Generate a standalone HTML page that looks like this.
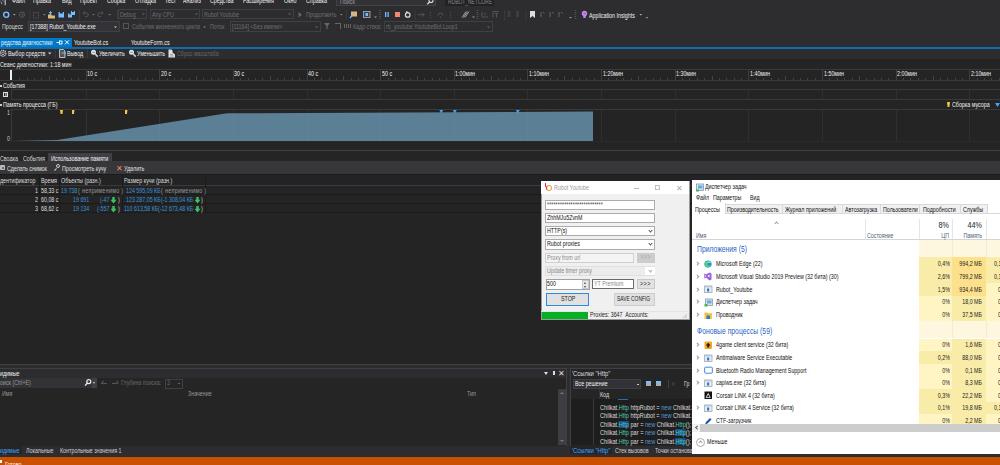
<!DOCTYPE html>
<html><head><meta charset="utf-8">
<style>
*{margin:0;padding:0;box-sizing:border-box}
html,body{width:1000px;height:465px;overflow:hidden;background:#2d2d30;font-family:"Liberation Sans",sans-serif;color:#f1f1f1}
body{position:relative}
.a{position:absolute;white-space:nowrap}
.t{position:absolute;white-space:nowrap;font-size:7px;line-height:10px;color:#f1f1f1;transform:scaleX(.76);transform-origin:0 0}
.w{position:absolute;white-space:nowrap;font-size:7px;line-height:10px;color:#000;transform:scaleX(.76);transform-origin:0 0}
.ln{position:absolute;background:#3f3f46}
</style></head><body>

<!-- base backgrounds -->
<div class="a" style="left:0;top:48px;width:1000px;height:12px;background:#2d2d30"></div>
<div class="a" style="left:0;top:59px;width:1000px;height:92px;background:#242425"></div>

<!-- ===== TOP CHROME ===== -->
<svg class="a" style="left:0;top:0" width="8" height="6"><path d="M0 0 l2.5 3.5 l-1 1z" fill="#999"/><path d="M4.5 0 h1.5 v5 l-1.5 .5z" fill="#a0a0a0"/><path d="M1.5 0 l3 2" stroke="#888" stroke-width=".8"/></svg>
<div class="t" style="left:12px;top:-4px">Файл</div>
<div class="t" style="left:33px;top:-4px">Правка</div>
<div class="t" style="left:62px;top:-4px">Вид</div>
<div class="t" style="left:80px;top:-4px">Проект</div>
<div class="t" style="left:107px;top:-4px">Сборка</div>
<div class="t" style="left:135px;top:-4px">Отладка</div>
<div class="t" style="left:165px;top:-4px">Тест</div>
<div class="t" style="left:183px;top:-4px">Анализ</div>
<div class="t" style="left:210px;top:-4px">Средства</div>
<div class="t" style="left:243px;top:-4px">Расширения</div>
<div class="t" style="left:284px;top:-4px">Окно</div>
<div class="t" style="left:306px;top:-4px">Справка</div>
<div class="a" style="left:336px;top:-1px;width:100px;height:6.5px;background:#333337;border:1px solid #434346"></div>
<div class="t g" style="left:340px;top:-3px;color:#999">Поиск</div>
<svg class="a" style="left:425px;top:-2px" width="10" height="8"><circle cx="6" cy="2.5" r="2" fill="none" stroke="#ddd" stroke-width="1.1"/><path d="M4.6 3.9 l-2.3 2.3" stroke="#ddd" stroke-width="1.3"/></svg>
<div class="a" style="left:445px;top:0;width:49px;height:5.5px;background:#222224"></div>
<div class="t" style="left:448px;top:-3.5px;color:#8a8a8a;font-size:6.5px">RUBOT_NETCORE</div>

<!-- toolbar -->
<svg class="a" style="left:0;top:0" width="650" height="21">
<circle cx="6.2" cy="14.7" r="2.6" fill="none" stroke="#75beff" stroke-width="1.3"/>
<path d="M5.3 13.2 L8 14.7 L5.3 16.2Z" fill="#1b2b3b"/>
<circle cx="6.2" cy="14.7" r="2" fill="none" stroke="#75beff" stroke-width=".5" opacity=".5"/>
<path d="M13 14 h2.6 l-1.3 1.4z" fill="#aaa"/>
<circle cx="22" cy="14.7" r="2.6" fill="none" stroke="#5a5a5a" stroke-width="1"/>
<path d="M23.2 13.6 L20.8 14.7 L23.2 15.8Z" fill="#5a5a5a"/>
<rect x="29.3" y="10" width="1" height="10" fill="#3a3a3d"/>
<path d="M33.5 12.5 h5 v5.5 h-5z" fill="none" stroke="#555" stroke-width="1" stroke-dasharray="1.5 1"/>
<path d="M43 14 h2.6 l-1.3 1.4z" fill="#888"/>
<path d="M48 14.5 h3 l1 1 h3 v3 h-7z" fill="#dcb67a"/>
<path d="M50.5 11 l1.8 2 h-1.1 v2 h-1.4 v-2 h-1.1z" fill="#75beff"/>
<path d="M58.5 12 h5.5 v5.5 h-5.5z" fill="#75beff"/>
<rect x="59.8" y="12" width="3" height="1.5" fill="#2d2d30"/>
<path d="M68 13.5 h4 v4 h-4z M71 11 h4 v4 h-4z" fill="#75beff"/>
<rect x="69" y="13.5" width="2" height="1" fill="#2d2d30"/><rect x="72" y="11" width="2" height="1" fill="#2d2d30"/>
<rect x="79" y="10" width="1" height="10" fill="#3a3a3d"/>
<path d="M83 13 h3.5 a1.8 1.8 0 0 1 0 3.6 h-1.5 M84.5 11.5 l-1.5 1.5 l1.5 1.5" fill="none" stroke="#555" stroke-width="1"/>
<path d="M92 14 h2.6 l-1.3 1.4z" fill="#777"/>
<path d="M103 13 h-3.5 a1.8 1.8 0 0 0 0 3.6 h1.5 M101.5 11.5 l1.5 1.5 l-1.5 1.5" fill="none" stroke="#555" stroke-width="1"/>
<path d="M108.5 14 h2.6 l-1.3 1.4z" fill="#777"/>
<rect x="117" y="10" width="1" height="10" fill="#3a3a3d"/>
<path d="M298.5 12 L302 14.7 L298.5 17.4Z" fill="#666"/>
<path d="M340 14 h2.6 l-1.3 1.4z" fill="#888"/>
<rect x="346" y="10" width="1" height="10" fill="#3a3a3d"/>
<path d="M351 11.5 h6 v5 h-6z" fill="#dcb67a"/>
<path d="M350 18 l2.5 -3" stroke="#75beff" stroke-width="1.3"/>
<rect x="363.5" y="11.5" width="6.5" height="6" fill="#2a4560" stroke="#9a9a9a" stroke-width="1"/>
<rect x="365.5" y="13" width="2.5" height="3" fill="#75beff"/>
<path d="M374 16.5 h3 l-1.5 1.5z" fill="#999"/>
<path d="M380 10 v9" stroke="#555" stroke-width="1.5" stroke-dasharray="1 1"/>
<rect x="385" y="12" width="1.3" height="5" fill="#75beff"/><rect x="387.5" y="12" width="1.3" height="5" fill="#75beff"/>
<rect x="395" y="12" width="5" height="5" fill="#f48771"/>
<circle cx="407.7" cy="14.9" r="2.3" fill="none" stroke="#ddd" stroke-width="1.2"/>
<path d="M406 11 l2.5 1 l-2 1.8z" fill="#ddd"/>
<rect x="414.5" y="10" width="1" height="10" fill="#3a3a3d"/>
<path d="M418 14.7 h6 M422 12.5 l2.2 2.2 l-2.2 2.2" fill="none" stroke="#555" stroke-width="1"/>
<path d="M430.5 12 v1 M430.5 14.5 v1 M430.5 17 v1" stroke="#555" stroke-width="1"/>
<path d="M438 15.5 a2.5 2.5 0 0 1 5 0" fill="none" stroke="#555" stroke-width="1"/><circle cx="440.5" cy="17" r=".7" fill="#555"/>
<path d="M450.5 12 v1 M450.5 14.5 v1 M450.5 17 v1" stroke="#555" stroke-width="1"/>
<path d="M462 17.5 l4 -6 M463.5 17.5 l4 -6 M465 17.5 l4 -6" stroke="#bbb" stroke-width=".8"/>
<path d="M472 16.5 h3 l-1.5 1.5z" fill="#999"/>
<path d="M477.5 10 v9" stroke="#555" stroke-width="1.5" stroke-dasharray="1 1"/>
<path d="M482 12 v5 h6 M484 15 l2 -2" fill="none" stroke="#555" stroke-width="1"/>
<path d="M493 17.5 v-6 h6 M495 13.5 h3 M496.5 13.5 v4" fill="none" stroke="#555" stroke-width="1"/>
<rect x="504" y="10" width="1" height="10" fill="#3a3a3d"/>
<path d="M507.5 12 h3 M507.5 14 h3 M507.5 16 h3" stroke="#555" stroke-width=".8"/>
<path d="M516 12 h3 M516 14 h3 M516 16 h3" stroke="#555" stroke-width=".8"/>
<rect x="525.5" y="10" width="1" height="10" fill="#3a3a3d"/>
<path d="M530 11 h5 v7 l-2.5 -2 l-2.5 2z" fill="#ddd"/>
<path d="M541 12 v5 M543 12 l1.5 1.5 M550 12 v5 M552 12 l1.5 1.5 M559 12 v5 M561 12 l1.5 1.5" stroke="#666" stroke-width="1"/>
<path d="M569 17 h3 l-1.5 1.5z" fill="#999"/>
<path d="M575.5 10 v9" stroke="#555" stroke-width="1.5" stroke-dasharray="1 1"/>
<circle cx="584.5" cy="13.5" r="2.7" fill="#c586f0"/><path d="M583.5 13 l1.5 1 l.5 -1.5" stroke="#5a3a70" stroke-width=".6" fill="none"/>
<path d="M583.3 16 h2.4 v2 h-2.4z" fill="#c586f0"/>
<path d="M639.5 14 h2.6 l-1.3 1.4z" fill="#bbb"/>
<path d="M645.5 17 h3 l-1.5 1.5z" fill="#999"/>
</svg>
<div class="a" style="left:117.5px;top:9px;width:29.5px;height:10px;border:1px solid #3f3f46"></div>
<div class="t" style="left:120px;top:9.5px;color:#6d6d6d">Debug</div>
<svg class="a" style="left:142px;top:13px" width="4" height="3"><path d="M0 .5 h3 l-1.5 1.5z" fill="#666"/></svg>
<div class="a" style="left:150px;top:9px;width:50px;height:10px;border:1px solid #3f3f46"></div>
<div class="t" style="left:152px;top:9.5px;color:#6d6d6d">Any CPU</div>
<svg class="a" style="left:195px;top:13px" width="4" height="3"><path d="M0 .5 h3 l-1.5 1.5z" fill="#666"/></svg>
<div class="a" style="left:202px;top:9px;width:92px;height:10px;border:1px solid #3f3f46"></div>
<div class="t" style="left:204px;top:9.5px;color:#6d6d6d">Rubot Youtube</div>
<svg class="a" style="left:288px;top:13px" width="4" height="3"><path d="M0 .5 h3 l-1.5 1.5z" fill="#666"/></svg>
<div class="t" style="left:306px;top:9.5px;color:#6d6d6d">Продолжить</div>
<div class="t" style="left:589px;top:10.8px">Application Insights</div>
<!-- process row -->
<div class="t" style="left:2px;top:21.5px;color:#dcdcdc">Процесс</div>
<div class="a" style="left:28px;top:21px;width:92px;height:11px;border:1px solid #3f3f46;background:#333337"></div>
<div class="t" style="left:30px;top:21.5px">[17388] Rubot_Youtube.exe</div>
<svg class="a" style="left:114px;top:25.5px" width="4" height="3"><path d="M0 .5 h3 l-1.5 1.5z" fill="#ccc"/></svg>
<div class="a" style="left:123px;top:23px;width:6px;height:6px;border:1px solid #555"></div>
<div class="t" style="left:132px;top:21.5px;color:#6d6d6d">События жизненного цикла</div>
<svg class="a" style="left:203px;top:25.5px" width="4" height="3"><path d="M0 .5 h3 l-1.5 1.5z" fill="#888"/></svg>
<div class="t" style="left:210px;top:21.5px;color:#6d6d6d">Поток</div>
<div class="a" style="left:230px;top:21px;width:91px;height:11px;border:1px solid #3f3f46"></div>
<div class="t" style="left:232px;top:21.5px;color:#6d6d6d">[11164] &lt;Без имени&gt;</div>
<svg class="a" style="left:315px;top:25.5px" width="4" height="3"><path d="M0 .5 h3 l-1.5 1.5z" fill="#666"/></svg>
<div class="a" style="left:324px;top:23px;width:6px;height:6px;background:#666;clip-path:polygon(0 0,100% 0,60% 50%,60% 100%,40% 100%,40% 50%)"></div>
<div class="a" style="left:335px;top:23px;width:6px;height:6px;border-top:1px solid #666;border-right:1px solid #666"></div>
<div class="a" style="left:344px;top:24px;width:7px;height:4px;background:repeating-linear-gradient(90deg,#666 0 1px,transparent 1px 2px)"></div>
<div class="t" style="left:353px;top:21.5px;color:#6d6d6d">Кадр стека:</div>
<div class="a" style="left:384px;top:21px;width:109px;height:11px;border:1px solid #3f3f46"></div>
<div class="t" style="left:386px;top:21.5px;color:#6d6d6d">rb_youtube.YoutubeBot.Loop1</div>
<svg class="a" style="left:487px;top:25.5px" width="4" height="3"><path d="M0 .5 h3 l-1.5 1.5z" fill="#666"/></svg>

<!-- document tabs -->
<div class="a" style="left:0;top:38px;width:72px;height:10px;background:#007acc"></div>
<div class="a" style="left:0;top:47px;width:1000px;height:1.5px;background:#0b6cb0"></div>
<div class="t" style="left:1px;top:37.5px">редства диагностики</div>
<svg class="a" style="left:55px;top:38px" width="16" height="10"><path d="M1.5 4.5 h3 M4.5 2.5 v4 M4.5 3 h2.5 v3 h-2.5" fill="none" stroke="#fff" stroke-width=".9"/><path d="M10 2.3 l4 4 M14 2.3 l-4 4" stroke="#fff" stroke-width="1"/></svg>
<div class="t" style="left:74px;top:37.5px">YoutubeBot.cs</div>
<div class="t" style="left:131px;top:37.5px">YoutubeForm.cs</div>

<!-- ===== DIAG ===== -->
<svg class="a" style="left:0;top:46px" width="180" height="14">
<circle cx="3" cy="7.3" r="2.9" fill="none" stroke="#c8c8c8" stroke-width="1.3" stroke-dasharray="1.3 .6"/>
<circle cx="3" cy="7.3" r="1.3" fill="none" stroke="#c8c8c8" stroke-width=".8"/>
<path d="M48 6.5 h3.5 l-1.75 2z" fill="#d0d0d0"/>
<rect x="55" y="3" width="1" height="9" fill="#3a3a3d"/>
<path d="M59.5 3.5 h4 l1.5 1.5 v6.5 h-5.5z" fill="#555" stroke="#c8c8c8" stroke-width=".9"/>
<path d="M61.5 7 h4 M64 5.5 l1.6 1.5 l-1.6 1.5" fill="none" stroke="#75beff" stroke-width="1"/>
<rect x="87" y="3" width="1" height="9" fill="#3a3a3d"/>
<circle cx="93.5" cy="6.3" r="2.5" fill="#e8e8e8"/><path d="M92.2 6.3 h2.6" stroke="#3a8ad0" stroke-width=".9"/>
<path d="M95.2 8 l2.5 2.6" stroke="#d0d0d0" stroke-width="1.6"/>
<circle cx="131.5" cy="6.3" r="2.5" fill="#e8e8e8"/><path d="M130.2 6.3 h2.6" stroke="#3a8ad0" stroke-width=".9"/>
<path d="M133.2 8 l2.5 2.6" stroke="#d0d0d0" stroke-width="1.6"/>
<path d="M168.5 3.5 h3 l1 1 v2 l2.5 2 v3 h-6.5z" fill="#e0e0e0"/>
<path d="M170 8.5 h3 M170 10 h3.5" stroke="#777" stroke-width=".6"/>
</svg>
<div class="t" style="left:8px;top:49px">Выбор средств</div>
<div class="t" style="left:67px;top:49px">Вывод</div>
<div class="t" style="left:99px;top:49px">Увеличить</div>
<div class="t" style="left:137px;top:49px">Уменьшить</div>
<div class="t" style="left:177px;top:49px;color:#656565">Сброс масштаба</div>
<div class="t" style="left:0;top:60px">Сеанс диагностики: 1:18 мин</div>
<div class="a" style="left:0;top:69px;width:1000px;height:1px;background:#3a3a3c"></div>
<div class="a" style="left:0;top:80px;width:1000px;height:1px;background:#3a3a3c"></div>
<div class="a" style="left:19.3px;top:78px;width:1px;height:2px;background:#444446"></div>
<div class="a" style="left:26.7px;top:78px;width:1px;height:2px;background:#444446"></div>
<div class="a" style="left:34.1px;top:78px;width:1px;height:2px;background:#444446"></div>
<div class="a" style="left:41.4px;top:78px;width:1px;height:2px;background:#444446"></div>
<div class="a" style="left:48.8px;top:76px;width:1px;height:4px;background:#444446"></div>
<div class="a" style="left:56.1px;top:78px;width:1px;height:2px;background:#444446"></div>
<div class="a" style="left:63.5px;top:78px;width:1px;height:2px;background:#444446"></div>
<div class="a" style="left:70.9px;top:78px;width:1px;height:2px;background:#444446"></div>
<div class="a" style="left:78.2px;top:78px;width:1px;height:2px;background:#444446"></div>
<div class="a" style="left:93.0px;top:78px;width:1px;height:2px;background:#444446"></div>
<div class="a" style="left:100.3px;top:78px;width:1px;height:2px;background:#444446"></div>
<div class="a" style="left:107.7px;top:78px;width:1px;height:2px;background:#444446"></div>
<div class="a" style="left:115.1px;top:78px;width:1px;height:2px;background:#444446"></div>
<div class="a" style="left:122.4px;top:76px;width:1px;height:4px;background:#444446"></div>
<div class="a" style="left:129.8px;top:78px;width:1px;height:2px;background:#444446"></div>
<div class="a" style="left:137.1px;top:78px;width:1px;height:2px;background:#444446"></div>
<div class="a" style="left:144.5px;top:78px;width:1px;height:2px;background:#444446"></div>
<div class="a" style="left:151.9px;top:78px;width:1px;height:2px;background:#444446"></div>
<div class="a" style="left:166.6px;top:78px;width:1px;height:2px;background:#444446"></div>
<div class="a" style="left:174.0px;top:78px;width:1px;height:2px;background:#444446"></div>
<div class="a" style="left:181.3px;top:78px;width:1px;height:2px;background:#444446"></div>
<div class="a" style="left:188.7px;top:78px;width:1px;height:2px;background:#444446"></div>
<div class="a" style="left:196.1px;top:76px;width:1px;height:4px;background:#444446"></div>
<div class="a" style="left:203.4px;top:78px;width:1px;height:2px;background:#444446"></div>
<div class="a" style="left:210.8px;top:78px;width:1px;height:2px;background:#444446"></div>
<div class="a" style="left:218.2px;top:78px;width:1px;height:2px;background:#444446"></div>
<div class="a" style="left:225.5px;top:78px;width:1px;height:2px;background:#444446"></div>
<div class="a" style="left:240.2px;top:78px;width:1px;height:2px;background:#444446"></div>
<div class="a" style="left:247.6px;top:78px;width:1px;height:2px;background:#444446"></div>
<div class="a" style="left:255.0px;top:78px;width:1px;height:2px;background:#444446"></div>
<div class="a" style="left:262.3px;top:78px;width:1px;height:2px;background:#444446"></div>
<div class="a" style="left:269.7px;top:76px;width:1px;height:4px;background:#444446"></div>
<div class="a" style="left:277.1px;top:78px;width:1px;height:2px;background:#444446"></div>
<div class="a" style="left:284.4px;top:78px;width:1px;height:2px;background:#444446"></div>
<div class="a" style="left:291.8px;top:78px;width:1px;height:2px;background:#444446"></div>
<div class="a" style="left:299.2px;top:78px;width:1px;height:2px;background:#444446"></div>
<div class="a" style="left:313.9px;top:78px;width:1px;height:2px;background:#444446"></div>
<div class="a" style="left:321.2px;top:78px;width:1px;height:2px;background:#444446"></div>
<div class="a" style="left:328.6px;top:78px;width:1px;height:2px;background:#444446"></div>
<div class="a" style="left:336.0px;top:78px;width:1px;height:2px;background:#444446"></div>
<div class="a" style="left:343.3px;top:76px;width:1px;height:4px;background:#444446"></div>
<div class="a" style="left:350.7px;top:78px;width:1px;height:2px;background:#444446"></div>
<div class="a" style="left:358.1px;top:78px;width:1px;height:2px;background:#444446"></div>
<div class="a" style="left:365.4px;top:78px;width:1px;height:2px;background:#444446"></div>
<div class="a" style="left:372.8px;top:78px;width:1px;height:2px;background:#444446"></div>
<div class="a" style="left:387.5px;top:78px;width:1px;height:2px;background:#444446"></div>
<div class="a" style="left:394.9px;top:78px;width:1px;height:2px;background:#444446"></div>
<div class="a" style="left:402.3px;top:78px;width:1px;height:2px;background:#444446"></div>
<div class="a" style="left:409.6px;top:78px;width:1px;height:2px;background:#444446"></div>
<div class="a" style="left:417.0px;top:76px;width:1px;height:4px;background:#444446"></div>
<div class="a" style="left:424.3px;top:78px;width:1px;height:2px;background:#444446"></div>
<div class="a" style="left:431.7px;top:78px;width:1px;height:2px;background:#444446"></div>
<div class="a" style="left:439.1px;top:78px;width:1px;height:2px;background:#444446"></div>
<div class="a" style="left:446.4px;top:78px;width:1px;height:2px;background:#444446"></div>
<div class="a" style="left:461.2px;top:78px;width:1px;height:2px;background:#444446"></div>
<div class="a" style="left:468.5px;top:78px;width:1px;height:2px;background:#444446"></div>
<div class="a" style="left:475.9px;top:78px;width:1px;height:2px;background:#444446"></div>
<div class="a" style="left:483.3px;top:78px;width:1px;height:2px;background:#444446"></div>
<div class="a" style="left:490.6px;top:76px;width:1px;height:4px;background:#444446"></div>
<div class="a" style="left:498.0px;top:78px;width:1px;height:2px;background:#444446"></div>
<div class="a" style="left:505.3px;top:78px;width:1px;height:2px;background:#444446"></div>
<div class="a" style="left:512.7px;top:78px;width:1px;height:2px;background:#444446"></div>
<div class="a" style="left:520.1px;top:78px;width:1px;height:2px;background:#444446"></div>
<div class="a" style="left:534.8px;top:78px;width:1px;height:2px;background:#444446"></div>
<div class="a" style="left:542.2px;top:78px;width:1px;height:2px;background:#444446"></div>
<div class="a" style="left:549.5px;top:78px;width:1px;height:2px;background:#444446"></div>
<div class="a" style="left:556.9px;top:78px;width:1px;height:2px;background:#444446"></div>
<div class="a" style="left:564.3px;top:76px;width:1px;height:4px;background:#444446"></div>
<div class="a" style="left:571.6px;top:78px;width:1px;height:2px;background:#444446"></div>
<div class="a" style="left:579.0px;top:78px;width:1px;height:2px;background:#444446"></div>
<div class="a" style="left:586.4px;top:78px;width:1px;height:2px;background:#444446"></div>
<div class="a" style="left:593.7px;top:78px;width:1px;height:2px;background:#444446"></div>
<div class="a" style="left:608.4px;top:78px;width:1px;height:2px;background:#444446"></div>
<div class="a" style="left:615.8px;top:78px;width:1px;height:2px;background:#444446"></div>
<div class="a" style="left:623.2px;top:78px;width:1px;height:2px;background:#444446"></div>
<div class="a" style="left:630.5px;top:78px;width:1px;height:2px;background:#444446"></div>
<div class="a" style="left:637.9px;top:76px;width:1px;height:4px;background:#444446"></div>
<div class="a" style="left:645.3px;top:78px;width:1px;height:2px;background:#444446"></div>
<div class="a" style="left:652.6px;top:78px;width:1px;height:2px;background:#444446"></div>
<div class="a" style="left:660.0px;top:78px;width:1px;height:2px;background:#444446"></div>
<div class="a" style="left:667.4px;top:78px;width:1px;height:2px;background:#444446"></div>
<div class="a" style="left:682.1px;top:78px;width:1px;height:2px;background:#444446"></div>
<div class="a" style="left:689.4px;top:78px;width:1px;height:2px;background:#444446"></div>
<div class="a" style="left:696.8px;top:78px;width:1px;height:2px;background:#444446"></div>
<div class="a" style="left:704.2px;top:78px;width:1px;height:2px;background:#444446"></div>
<div class="a" style="left:711.5px;top:76px;width:1px;height:4px;background:#444446"></div>
<div class="a" style="left:718.9px;top:78px;width:1px;height:2px;background:#444446"></div>
<div class="a" style="left:726.3px;top:78px;width:1px;height:2px;background:#444446"></div>
<div class="a" style="left:733.6px;top:78px;width:1px;height:2px;background:#444446"></div>
<div class="a" style="left:741.0px;top:78px;width:1px;height:2px;background:#444446"></div>
<div class="a" style="left:755.7px;top:78px;width:1px;height:2px;background:#444446"></div>
<div class="a" style="left:763.1px;top:78px;width:1px;height:2px;background:#444446"></div>
<div class="a" style="left:770.5px;top:78px;width:1px;height:2px;background:#444446"></div>
<div class="a" style="left:777.8px;top:78px;width:1px;height:2px;background:#444446"></div>
<div class="a" style="left:785.2px;top:76px;width:1px;height:4px;background:#444446"></div>
<div class="a" style="left:792.5px;top:78px;width:1px;height:2px;background:#444446"></div>
<div class="a" style="left:799.9px;top:78px;width:1px;height:2px;background:#444446"></div>
<div class="a" style="left:807.3px;top:78px;width:1px;height:2px;background:#444446"></div>
<div class="a" style="left:814.6px;top:78px;width:1px;height:2px;background:#444446"></div>
<div class="a" style="left:829.4px;top:78px;width:1px;height:2px;background:#444446"></div>
<div class="a" style="left:836.7px;top:78px;width:1px;height:2px;background:#444446"></div>
<div class="a" style="left:844.1px;top:78px;width:1px;height:2px;background:#444446"></div>
<div class="a" style="left:851.5px;top:78px;width:1px;height:2px;background:#444446"></div>
<div class="a" style="left:858.8px;top:76px;width:1px;height:4px;background:#444446"></div>
<div class="a" style="left:866.2px;top:78px;width:1px;height:2px;background:#444446"></div>
<div class="a" style="left:873.5px;top:78px;width:1px;height:2px;background:#444446"></div>
<div class="a" style="left:880.9px;top:78px;width:1px;height:2px;background:#444446"></div>
<div class="a" style="left:888.3px;top:78px;width:1px;height:2px;background:#444446"></div>
<div class="a" style="left:903.0px;top:78px;width:1px;height:2px;background:#444446"></div>
<div class="a" style="left:910.4px;top:78px;width:1px;height:2px;background:#444446"></div>
<div class="a" style="left:917.7px;top:78px;width:1px;height:2px;background:#444446"></div>
<div class="a" style="left:925.1px;top:78px;width:1px;height:2px;background:#444446"></div>
<div class="a" style="left:932.5px;top:76px;width:1px;height:4px;background:#444446"></div>
<div class="a" style="left:939.8px;top:78px;width:1px;height:2px;background:#444446"></div>
<div class="a" style="left:947.2px;top:78px;width:1px;height:2px;background:#444446"></div>
<div class="a" style="left:954.6px;top:78px;width:1px;height:2px;background:#444446"></div>
<div class="a" style="left:961.9px;top:78px;width:1px;height:2px;background:#444446"></div>
<div class="a" style="left:976.6px;top:78px;width:1px;height:2px;background:#444446"></div>
<div class="a" style="left:984.0px;top:78px;width:1px;height:2px;background:#444446"></div>
<div class="a" style="left:991.4px;top:78px;width:1px;height:2px;background:#444446"></div>
<div class="a" style="left:998.7px;top:78px;width:1px;height:2px;background:#444446"></div>
<div class="a" style="left:85.6px;top:70px;width:1px;height:10px;background:#3e3e40"></div>
<div class="t" style="left:87.1px;top:69.2px">10 с</div>
<div class="a" style="left:159.2px;top:70px;width:1px;height:10px;background:#3e3e40"></div>
<div class="t" style="left:160.7px;top:69.2px">20 с</div>
<div class="a" style="left:232.9px;top:70px;width:1px;height:10px;background:#3e3e40"></div>
<div class="t" style="left:234.4px;top:69.2px">30 с</div>
<div class="a" style="left:306.5px;top:70px;width:1px;height:10px;background:#3e3e40"></div>
<div class="t" style="left:308.0px;top:69.2px">40 с</div>
<div class="a" style="left:380.2px;top:70px;width:1px;height:10px;background:#3e3e40"></div>
<div class="t" style="left:381.7px;top:69.2px">50 с</div>
<div class="a" style="left:453.8px;top:70px;width:1px;height:10px;background:#3e3e40"></div>
<div class="t" style="left:455.3px;top:69.2px">1:00мин</div>
<div class="a" style="left:527.4px;top:70px;width:1px;height:10px;background:#3e3e40"></div>
<div class="t" style="left:528.9px;top:69.2px">1:10мин</div>
<div class="a" style="left:601.1px;top:70px;width:1px;height:10px;background:#3e3e40"></div>
<div class="t" style="left:602.6px;top:69.2px">1:20мин</div>
<div class="a" style="left:674.7px;top:70px;width:1px;height:10px;background:#3e3e40"></div>
<div class="t" style="left:676.2px;top:69.2px">1:30мин</div>
<div class="a" style="left:748.4px;top:70px;width:1px;height:10px;background:#3e3e40"></div>
<div class="t" style="left:749.9px;top:69.2px">1:40мин</div>
<div class="a" style="left:822.0px;top:70px;width:1px;height:10px;background:#3e3e40"></div>
<div class="t" style="left:823.5px;top:69.2px">1:50мин</div>
<div class="a" style="left:895.6px;top:70px;width:1px;height:10px;background:#3e3e40"></div>
<div class="t" style="left:897.1px;top:69.2px">2:00мин</div>
<div class="a" style="left:969.3px;top:70px;width:1px;height:10px;background:#3e3e40"></div>
<div class="t" style="left:970.8px;top:69.2px">2:10мин</div>
<div class="a" style="left:10px;top:70px;width:2px;height:9.5px;background:#f0f0f0"></div>
<div class="a" style="left:0;top:85px;width:1.5px;height:2px;background:#ccc"></div>
<div class="t" style="left:3px;top:80.6px">События</div>
<div class="a" style="left:11px;top:89px;width:989px;height:1px;background:#3a3a3c"></div>
<div class="a" style="left:11px;top:99px;width:989px;height:1px;background:#3a3a3c"></div>
<div class="a" style="left:11px;top:89px;width:1px;height:11px;background:#3a3a3c"></div>
<div class="a" style="left:3px;top:91.5px;width:5px;height:5.5px;background:#ddd"></div>
<div class="a" style="left:4.2px;top:92.5px;width:1px;height:3.5px;background:#252526;box-shadow:1.6px 0 0 #252526"></div>
<div class="a" style="left:0;top:104px;width:1.5px;height:2px;background:#ccc"></div>
<div class="t" style="left:3px;top:100.4px">Память процесса (ГБ)</div>
<div class="a" style="left:11px;top:109px;width:989px;height:1px;background:#3a3a3c"></div>
<div class="a" style="left:11px;top:141px;width:989px;height:1px;background:#2a2a2b"></div>
<div class="a" style="left:11px;top:109px;width:1px;height:32px;background:#3a3a3c"></div>
<div class="t" style="left:6.5px;top:107.5px;color:#ccc">1</div>
<div class="t" style="left:6.5px;top:133.5px;color:#ccc">0</div>
<div class="a" style="left:85.6px;top:90px;width:1px;height:9px;background:#2f2f31"></div>
<div class="a" style="left:85.6px;top:110px;width:1px;height:31px;background:#2f2f31"></div>
<div class="a" style="left:159.2px;top:90px;width:1px;height:9px;background:#2f2f31"></div>
<div class="a" style="left:159.2px;top:110px;width:1px;height:31px;background:#2f2f31"></div>
<div class="a" style="left:232.9px;top:90px;width:1px;height:9px;background:#2f2f31"></div>
<div class="a" style="left:232.9px;top:110px;width:1px;height:31px;background:#2f2f31"></div>
<div class="a" style="left:306.5px;top:90px;width:1px;height:9px;background:#2f2f31"></div>
<div class="a" style="left:306.5px;top:110px;width:1px;height:31px;background:#2f2f31"></div>
<div class="a" style="left:380.2px;top:90px;width:1px;height:9px;background:#2f2f31"></div>
<div class="a" style="left:380.2px;top:110px;width:1px;height:31px;background:#2f2f31"></div>
<div class="a" style="left:453.8px;top:90px;width:1px;height:9px;background:#2f2f31"></div>
<div class="a" style="left:453.8px;top:110px;width:1px;height:31px;background:#2f2f31"></div>
<div class="a" style="left:527.4px;top:90px;width:1px;height:9px;background:#2f2f31"></div>
<div class="a" style="left:527.4px;top:110px;width:1px;height:31px;background:#2f2f31"></div>
<div class="a" style="left:601.1px;top:90px;width:1px;height:9px;background:#2f2f31"></div>
<div class="a" style="left:601.1px;top:110px;width:1px;height:31px;background:#2f2f31"></div>
<div class="a" style="left:674.7px;top:90px;width:1px;height:9px;background:#2f2f31"></div>
<div class="a" style="left:674.7px;top:110px;width:1px;height:31px;background:#2f2f31"></div>
<div class="a" style="left:748.4px;top:90px;width:1px;height:9px;background:#2f2f31"></div>
<div class="a" style="left:748.4px;top:110px;width:1px;height:31px;background:#2f2f31"></div>
<div class="a" style="left:822.0px;top:90px;width:1px;height:9px;background:#2f2f31"></div>
<div class="a" style="left:822.0px;top:110px;width:1px;height:31px;background:#2f2f31"></div>
<div class="a" style="left:895.6px;top:90px;width:1px;height:9px;background:#2f2f31"></div>
<div class="a" style="left:895.6px;top:110px;width:1px;height:31px;background:#2f2f31"></div>
<div class="a" style="left:969.3px;top:90px;width:1px;height:9px;background:#2f2f31"></div>
<div class="a" style="left:969.3px;top:110px;width:1px;height:31px;background:#2f2f31"></div>
<svg class="a" style="left:0;top:0" width="1000" height="150"><polygon points="12,141 57,140 227,113.3 593,111.5 593,141" fill="#5b8096"/></svg>
<div class="a" style="left:85.6px;top:113px;width:1px;height:28px;background:rgba(255,255,255,.02)"></div>
<div class="a" style="left:159.2px;top:113px;width:1px;height:28px;background:rgba(255,255,255,.02)"></div>
<div class="a" style="left:232.9px;top:113px;width:1px;height:28px;background:rgba(255,255,255,.02)"></div>
<div class="a" style="left:306.5px;top:113px;width:1px;height:28px;background:rgba(255,255,255,.02)"></div>
<div class="a" style="left:380.2px;top:113px;width:1px;height:28px;background:rgba(255,255,255,.02)"></div>
<div class="a" style="left:453.8px;top:113px;width:1px;height:28px;background:rgba(255,255,255,.02)"></div>
<div class="a" style="left:527.4px;top:113px;width:1px;height:28px;background:rgba(255,255,255,.02)"></div>
<div class="a" style="left:60px;top:109.5px;width:3px;height:4.8px;background:#f5c842;clip-path:polygon(0 0,100% 0,80% 100%,20% 100%)"></div>
<div class="a" style="left:71.5px;top:109.5px;width:3px;height:4.8px;background:#f5c842;clip-path:polygon(0 0,100% 0,80% 100%,20% 100%)"></div>
<div class="a" style="left:124.5px;top:109.5px;width:3px;height:4.8px;background:#f5c842;clip-path:polygon(0 0,100% 0,80% 100%,20% 100%)"></div>
<div class="a" style="left:439px;top:109.5px;width:4.5px;height:4px;background:#3fa2f7;clip-path:polygon(0 0,100% 0,50% 100%)"></div>
<div class="a" style="left:452.5px;top:109.5px;width:4.5px;height:4px;background:#3fa2f7;clip-path:polygon(0 0,100% 0,50% 100%)"></div>
<div class="a" style="left:515.5px;top:109.5px;width:4.5px;height:4px;background:#3fa2f7;clip-path:polygon(0 0,100% 0,50% 100%)"></div>
<div class="a" style="left:947px;top:102px;width:3px;height:5px;background:#f5c842;clip-path:polygon(0 0,100% 0,80% 100%,20% 100%)"></div>
<div class="t" style="left:952px;top:100.3px">Сборка мусора</div>
<div class="a" style="left:995px;top:103px;width:5px;height:4px;background:#3fa2f7;clip-path:polygon(0 0,100% 0,50% 100%)"></div>
<!-- ===== LOWER DIAG ===== -->
<div class="a" style="left:0;top:150px;width:1000px;height:1px;background:#3f3f46"></div>
<div class="a" style="left:0;top:151px;width:1000px;height:10px;background:#252526"></div>
<div class="a" style="left:48px;top:152.5px;width:64px;height:8.5px;background:#3f3f46"></div>
<div class="t" style="left:0;top:153.5px;color:#dcdcdc">Сводка</div>
<div class="t" style="left:23px;top:153.5px;color:#dcdcdc">События</div>
<div class="t" style="left:51px;top:153.5px;color:#f1f1f1">Использование памяти</div>
<div class="a" style="left:0;top:161px;width:1000px;height:13.5px;background:#37373a"></div>
<div class="a" style="left:0;top:165px;width:5px;height:5px;background:#bbb;border-radius:1px"></div>
<div class="a" style="left:1.5px;top:166.5px;width:2px;height:2px;background:#555;border-radius:50%"></div>
<div class="t" style="left:7px;top:163.5px;color:#e0e0e0">Сделать снимок</div>
<div class="a" style="left:56px;top:164px;width:4px;height:4px;border:1px solid #ccc;border-radius:50%"></div>
<div class="a" style="left:54px;top:168.5px;width:3px;height:1px;background:#ccc;transform:rotate(-45deg)"></div>
<div class="t" style="left:62px;top:163.5px;color:#e0e0e0">Просмотреть кучу</div>
<div class="t" style="left:115.5px;top:163.5px;color:#f48771;font-size:8px;transform:none">&#x2715;</div>
<div class="t" style="left:124px;top:163.5px;color:#e0e0e0">Удалить</div>
<div class="a" style="left:0;top:174px;width:1000px;height:190px;background:#242425"></div>
<div class="a" style="left:0;top:174.5px;width:1000px;height:10.5px;background:#232325"></div>
<div class="a" style="left:0;top:174px;width:1000px;height:1px;background:#1b1b1c"></div>
<div class="a" style="left:0;top:185px;width:1000px;height:1px;background:#3a3a3c"></div>
<div class="a" style="left:0;top:194px;width:1000px;height:1px;background:#1b1b1c"></div>
<div class="a" style="left:0;top:203px;width:1000px;height:1px;background:#1b1b1c"></div>
<div class="a" style="left:0;top:212px;width:1000px;height:1px;background:#1b1b1c"></div>
<div class="a" style="left:38.5px;top:174px;width:1px;height:39px;background:#1b1b1c"></div>
<div class="a" style="left:58.5px;top:174px;width:1px;height:39px;background:#1b1b1c"></div>
<div class="a" style="left:121.5px;top:174px;width:1px;height:39px;background:#1b1b1c"></div>
<div class="a" style="left:204.5px;top:174px;width:1px;height:39px;background:#1b1b1c"></div>
<div class="t" style="left:0;top:176px;color:#dcdcdc">дентификатор</div>
<div class="t" style="left:41px;top:176px;color:#dcdcdc">Время</div>
<div class="t" style="left:61px;top:176px;color:#dcdcdc">Объекты (разн.)</div>
<div class="t" style="left:124px;top:176px;color:#dcdcdc">Размер кучи (разн.)</div>
<div class="t" style="left:34.5px;top:186px;color:#dcdcdc">1</div>
<div class="t" style="left:41px;top:186px;color:#dcdcdc">58,33 с</div>
<div class="t" style="left:34.5px;top:195px;color:#dcdcdc">2</div>
<div class="t" style="left:41px;top:195px;color:#dcdcdc">60,08 с</div>
<div class="t" style="left:34.5px;top:204px;color:#dcdcdc">3</div>
<div class="t" style="left:41px;top:204px;color:#dcdcdc">68,62 с</div>
<div class="t" style="left:61px;top:186px;color:#3592d8">19 738</div>
<div class="t" style="left:78px;top:186px;color:#9a9a9a;letter-spacing:.45px">( неприменимо )</div>
<div class="t" style="left:126px;top:186px;color:#3592d8">124 595,09 КБ</div>
<div class="t" style="left:161px;top:186px;color:#9a9a9a;letter-spacing:.45px">( неприменимо )</div>
<div class="t" style="left:73px;top:195px;color:#3592d8">19 691</div>
<div class="t" style="left:100px;top:195px;color:#3592d8">(-47</div>
<div class="t" style="left:126px;top:195px;color:#3592d8">123 287,05 КБ</div>
<div class="t" style="left:161px;top:195px;color:#3592d8">(-1 308,04 КБ</div>
<div class="t" style="left:73px;top:204px;color:#3592d8">19 134</div>
<div class="t" style="left:97px;top:204px;color:#3592d8">(-557</div>
<div class="t" style="left:124px;top:204px;color:#3592d8">110 613,58 КБ</div>
<div class="t" style="left:158px;top:204px;color:#3592d8">(-12 673,48 КБ</div>
<div class="a" style="left:110.5px;top:196.5px;width:6px;height:7px;background:#3cc060;clip-path:polygon(30% 0,70% 0,70% 45%,100% 45%,50% 100%,0 45%,30% 45%)"></div>
<div class="a" style="left:194.5px;top:196.5px;width:6px;height:7px;background:#3cc060;clip-path:polygon(30% 0,70% 0,70% 45%,100% 45%,50% 100%,0 45%,30% 45%)"></div>
<div class="t" style="left:118px;top:195px;color:#ccc">)</div>
<div class="t" style="left:201px;top:195px;color:#ccc">)</div>
<div class="a" style="left:110.5px;top:205.5px;width:6px;height:7px;background:#3cc060;clip-path:polygon(30% 0,70% 0,70% 45%,100% 45%,50% 100%,0 45%,30% 45%)"></div>
<div class="a" style="left:194.5px;top:205.5px;width:6px;height:7px;background:#3cc060;clip-path:polygon(30% 0,70% 0,70% 45%,100% 45%,50% 100%,0 45%,30% 45%)"></div>
<div class="t" style="left:118px;top:204px;color:#ccc">)</div>
<div class="t" style="left:201px;top:204px;color:#ccc">)</div>
<div class="a" style="left:0;top:364px;width:1000px;height:1px;background:#3f3f46"></div>
<div class="a" style="left:0;top:365px;width:1000px;height:92px;background:#2d2d30"></div>
<div class="a" style="left:0;top:367.5px;width:566.5px;height:1px;background:#3f3f46"></div>
<div class="a" style="left:0;top:368.5px;width:566px;height:77px;background:#252526"></div>
<div class="a" style="left:566px;top:367.5px;width:1px;height:78px;background:#3f3f46"></div>
<div class="a" style="left:0;top:368.5px;width:566px;height:9px;background:#2d2d30"></div>
<div class="t" style="left:0;top:368.5px;color:#f1f1f1">идимые</div>
<div class="a" style="left:544px;top:372px;width:0;height:0;border-top:3px solid #ddd;border-left:2px solid transparent;border-right:2px solid transparent"></div>
<div class="a" style="left:552.5px;top:371px;width:2px;height:4px;border:1px solid #ddd"></div>
<div class="t" style="left:558px;top:368.5px;color:#ddd;font-size:8px;transform:none">&#x2715;</div>
<div class="a" style="left:0;top:378px;width:97px;height:10px;background:#333337"></div>
<div class="a" style="left:92px;top:378px;width:5px;height:10px;background:#3f3f46"></div>
<div class="t" style="left:0;top:378px;color:#999">оиск (Ctrl+E)</div>
<svg class="a" style="left:84px;top:378px" width="8" height="10"><circle cx="4.8" cy="3.6" r="2" fill="none" stroke="#eee" stroke-width="1.2"/><path d="M3.4 5 l-2.3 2.6" stroke="#eee" stroke-width="1.4"/></svg>

<div class="a" style="left:93px;top:382px;width:0;height:0;border-top:2px solid #ccc;border-left:1.5px solid transparent;border-right:1.5px solid transparent"></div>
<div class="a" style="left:101px;top:383px;width:6px;height:1px;background:#555"></div><div class="a" style="left:101.5px;top:381px;width:3px;height:3px;border-left:1px solid #555;border-bottom:1px solid #555;transform:rotate(45deg)"></div>
<div class="a" style="left:112px;top:383px;width:6px;height:1px;background:#555"></div><div class="a" style="left:114.5px;top:381px;width:3px;height:3px;border-top:1px solid #555;border-right:1px solid #555;transform:rotate(45deg)"></div>
<div class="t" style="left:121px;top:378px;color:#656565">Глубина поиска:</div>
<div class="a" style="left:165px;top:378.5px;width:18px;height:10px;border:1px solid #3f3f46"></div>
<div class="t" style="left:167px;top:378px;color:#656565">3</div>
<div class="a" style="left:178px;top:383px;width:2px;height:1px;background:#666"></div>
<div class="a" style="left:0;top:389px;width:558px;height:11px;background:#252526"></div>
<div class="t" style="left:2px;top:388.5px;color:#999">Имя</div>
<div class="t" style="left:188px;top:388.5px;color:#999">Значение</div>
<div class="t" style="left:467px;top:388.5px;color:#999">Тип</div>
<div class="a" style="left:558px;top:389px;width:8px;height:56px;background:#3e3e42"></div>
<div class="a" style="left:560px;top:392px;width:0;height:0;border-bottom:2px solid #777;border-left:2px solid transparent;border-right:2px solid transparent"></div>
<div class="a" style="left:560px;top:440px;width:0;height:0;border-top:2px solid #777;border-left:2px solid transparent;border-right:2px solid transparent"></div>
<div class="a" style="left:0;top:445.5px;width:566px;height:8.5px;background:#2d2d30"></div>
<div class="a" style="left:0;top:445.5px;width:22px;height:8.5px;background:#252526"></div>
<div class="t" style="left:0;top:446px;color:#3ea6ff">идимые</div>
<div class="t" style="left:26px;top:446px;color:#d0d0d0">Локальные</div>
<div class="t" style="left:60px;top:446px;color:#d0d0d0">Контрольные значения 1</div>
<div class="a" style="left:570px;top:367.5px;width:122px;height:78px;background:#252526;border-top:1px solid #3f3f46;border-left:1px solid #3f3f46"></div>
<div class="t" style="left:572px;top:368.5px;color:#dcdcdc;transform:scaleX(.84)">'Ссылки "Http"</div>
<div class="a" style="left:573px;top:379px;width:68px;height:10px;background:#333337;border:1px solid #3f3f46"></div>
<div class="t" style="left:575px;top:379px;color:#f1f1f1">Все решение</div>
<div class="a" style="left:637px;top:384px;width:2px;height:1px;background:#ccc"></div>
<div class="a" style="left:646px;top:381px;width:5px;height:5px;background:#aaa;border-top:2px solid #75beff"></div>
<div class="a" style="left:656px;top:381px;width:5px;height:5px;background:#aaa;border-top:2px solid #75beff"></div>
<div class="a" style="left:668px;top:380px;width:1px;height:8px;background:#3f3f46"></div>
<div class="t" style="left:672px;top:379px;color:#555">x</div>
<div class="t" style="left:684px;top:379px;color:#dcdcdc">Гр</div>
<div class="a" style="left:571px;top:389px;width:121px;height:56px;background:#1e1e1e"></div>
<div class="a" style="left:571px;top:389px;width:121px;height:10px;background:#252526"></div>
<div class="a" style="left:598.5px;top:389px;width:1px;height:10px;background:#333"></div>
<div class="t" style="left:600px;top:389.5px;color:#dcdcdc">Код</div>
<div class="a" style="left:592.5px;top:399px;width:1px;height:46px;background:#3a3a3a"></div>
<div class="a" style="left:618px;top:399px;width:10px;height:1px;background:#2a6ab0"></div>
<div class="t" style="left:600px;top:402.5px;transform:scaleX(.8)"><span style="color:#dcdcdc">Chilkat.</span><span style="color:#4ec9b0">Http</span><span style="color:#dcdcdc"> httpRubot = </span><span style="color:#569cd6">new</span><span style="color:#dcdcdc"> Chilkat.</span><span style="color:#4ec9b0;background:#1a4f87">Http</span></div>
<div class="t" style="left:600px;top:411px;transform:scaleX(.8)"><span style="color:#dcdcdc">Chilkat.</span><span style="color:#4ec9b0">Http</span><span style="color:#dcdcdc"> httpRubot = </span><span style="color:#569cd6">new</span><span style="color:#dcdcdc"> Chilkat.</span><span style="color:#4ec9b0;background:#1a4f87">Http</span></div>
<div class="t" style="left:600px;top:419.5px;transform:scaleX(.8)"><span style="color:#dcdcdc">Chilkat.</span><span style="color:#4ec9b0;background:#1a4f87">Http</span><span style="color:#dcdcdc"> par = </span><span style="color:#569cd6">new</span><span style="color:#dcdcdc"> Chilkat.</span><span style="color:#4ec9b0">Http</span><span style="color:#dcdcdc">(); </span></div>
<div class="t" style="left:600px;top:428.2px;transform:scaleX(.8)"><span style="color:#dcdcdc">Chilkat.</span><span style="color:#4ec9b0">Http</span><span style="color:#dcdcdc"> par = </span><span style="color:#569cd6">new</span><span style="color:#dcdcdc"> Chilkat.</span><span style="color:#4ec9b0;background:#1a4f87">Http</span><span style="color:#dcdcdc">(); </span></div>
<div class="t" style="left:600px;top:436.7px;transform:scaleX(.8)"><span style="color:#dcdcdc">Chilkat.</span><span style="color:#4ec9b0">Http</span><span style="color:#dcdcdc"> par = </span><span style="color:#569cd6">new</span><span style="color:#dcdcdc"> Chilkat.</span><span style="color:#4ec9b0;background:#1a4f87">Http</span><span style="color:#dcdcdc">(); </span></div>
<div class="a" style="left:570px;top:445.5px;width:122px;height:8.5px;background:#2d2d30"></div>
<div class="a" style="left:570px;top:445.5px;width:42px;height:8.5px;background:#252526"></div>
<div class="t" style="left:572px;top:446px;color:#3ea6ff;transform:scaleX(.84)">'Ссылки "Http"</div>
<div class="t" style="left:615px;top:446px;color:#d0d0d0">Стек вызовов</div>
<div class="t" style="left:655px;top:446px;color:#d0d0d0">Точки останова</div>
<div class="a" style="left:0;top:457.4px;width:1000px;height:8px;background:#ca5100"></div>
<div class="a" style="left:0;top:460px;width:1.5px;height:3px;background:#fff"></div>
<div class="t" style="left:5px;top:459.5px;color:#fff">Готово</div>
<!-- ===== RUBOT ===== -->
<div class="a" style="left:540.5px;top:180.5px;width:149px;height:139.3px;background:#f0f0f0;border:1px solid #9a9a9a"></div>
<div class="a" style="left:541px;top:181px;width:148px;height:13px;background:#fff"></div>
<div class="a" style="left:545.5px;top:184.5px;width:6px;height:6px;border:1.3px solid #f0a040;border-radius:50%;border-left-color:#e03030"></div>
<div class="a" style="left:545px;top:183px;width:1.2px;height:4px;background:#e03030"></div>
<div class="w" style="left:554px;top:182.5px;color:#9a9a9a">Rubot Youtube</div>
<div class="a" style="left:634px;top:187.5px;width:5px;height:1px;background:#bbb"></div>
<div class="a" style="left:654.5px;top:184.5px;width:5px;height:5px;border:1px solid #c0c0c0"></div>
<div class="w" style="left:675.5px;top:183.5px;color:#aaa;font-size:8px;transform:none">&#x2715;</div>
<div class="a" style="left:545px;top:199.5px;width:110px;height:10.5px;background:#fff;border:1px solid #ababab"></div>
<div class="w" style="left:547px;top:200.3px;color:#444;font-size:7px;letter-spacing:.1px">**************************</div>
<div class="a" style="left:545px;top:212.5px;width:110px;height:10px;background:#fff;border:1px solid #ababab"></div>
<div class="w" style="left:547px;top:212.5px;color:#111">ZhhMJu5ZvnM</div>
<div class="a" style="left:545px;top:225.5px;width:110px;height:10.5px;background:#fff;border:1px solid #ababab"></div>
<div class="w" style="left:547px;top:225.5px;color:#111">HTTP(s)</div>
<div class="a" style="left:649px;top:228.5px;width:3px;height:3px;border-right:1px solid #555;border-bottom:1px solid #555;transform:rotate(45deg)"></div>
<div class="a" style="left:545px;top:239px;width:110px;height:10.5px;background:#fff;border:1px solid #ababab"></div>
<div class="w" style="left:547px;top:239px;color:#111">Rubot proxies</div>
<div class="a" style="left:649px;top:242px;width:3px;height:3px;border-right:1px solid #555;border-bottom:1px solid #555;transform:rotate(45deg)"></div>
<div class="a" style="left:545px;top:252.5px;width:89px;height:10px;background:#f4f4f4;border:1px solid #d0d0d0"></div>
<div class="w" style="left:547px;top:252.5px;color:#8a8a8a">Proxy from url</div>
<div class="a" style="left:636.5px;top:252.5px;width:18px;height:10px;background:#cccccc"></div>
<div class="w" style="left:640px;top:252px;color:#a5a5a5;letter-spacing:.6px">&gt;&gt;&gt;</div>
<div class="a" style="left:545px;top:266px;width:110px;height:9.5px;background:#ececec;border:1px solid #e0e0e0"></div>
<div class="a" style="left:645px;top:266.5px;width:9.5px;height:8.5px;background:#fff"></div>
<div class="w" style="left:547px;top:266px;color:#8a8a8a">Update timer proxy</div>
<div class="a" style="left:649px;top:268.5px;width:3px;height:3px;border-right:1px solid #aaa;border-bottom:1px solid #aaa;transform:rotate(45deg)"></div>
<div class="a" style="left:545.5px;top:279px;width:44px;height:10.5px;background:#fff;border:1px solid #a0a0a0"></div>
<div class="w" style="left:547px;top:279px;color:#111">500</div>
<div class="a" style="left:582px;top:280px;width:6.5px;height:8.5px;background:#e8e8e8;border:1px solid #c8c8c8"></div>
<div class="a" style="left:583.5px;top:281.5px;width:0;height:0;border-bottom:2px solid #444;border-left:1.5px solid transparent;border-right:1.5px solid transparent"></div>
<div class="a" style="left:583.5px;top:285.5px;width:0;height:0;border-top:2px solid #444;border-left:1.5px solid transparent;border-right:1.5px solid transparent"></div>
<div class="a" style="left:592px;top:278.5px;width:42px;height:10.5px;background:#fff;border:1px solid #6a6a6a"></div>
<div class="w" style="left:594px;top:278.5px;color:#8a8a8a">YT Premium</div>
<div class="a" style="left:636.5px;top:279px;width:18px;height:10px;background:#e1e1e1;border:1px solid #c8c8c8"></div>
<div class="w" style="left:640px;top:278.5px;color:#222;letter-spacing:.6px">&gt;&gt;&gt;</div>
<div class="a" style="left:546px;top:292.5px;width:43px;height:13px;background:#e1e1e1;border:1.3px solid #2c8be0"></div>
<div class="w" style="left:560.5px;top:293.5px;color:#222">STOP</div>
<div class="a" style="left:613.5px;top:292.5px;width:41px;height:13px;background:#e1e1e1;border:1px solid #cdcdcd"></div>
<div class="w" style="left:617px;top:293.5px;color:#222;transform:scaleX(.7)">SAVE CONFIG</div>
<div class="a" style="left:541px;top:310.5px;width:148px;height:1px;background:#e4e4e4"></div>
<div class="a" style="left:542px;top:311.5px;width:45.5px;height:7px;background:#06b025"></div>
<div class="w" style="left:590px;top:309.5px;color:#222">Proxies: 3647&nbsp; Accounts:</div>
<div class="a" style="left:682px;top:313px;width:5px;height:5px;background:radial-gradient(circle,#bbb 0.6px,transparent 0.8px) 0 0/2px 2px;clip-path:polygon(100% 0,100% 100%,0 100%)"></div>
<!-- ===== TASK MANAGER ===== -->
<div class="a" style="left:692px;top:180px;width:308px;height:273.8px;background:#fff"></div>
<svg class="a" style="left:695px;top:183px" width="10" height="10">
<rect x="1.5" y="1" width="7" height="6.5" fill="#d8e2ea" stroke="#8b9aa6" stroke-width=".8"/>
<rect x="3" y="2.5" width="4.5" height="3" fill="#5ab0e8"/>
<path d="M1 8.5 h3 v-2 h-3z" fill="#4caf50"/>
</svg>
<div class="w" style="left:705px;top:182px;color:#111">Диспетчер задач</div>
<div class="w" style="left:696px;top:193.2px;color:#111">Файл</div>
<div class="w" style="left:713px;top:193.2px;color:#111">Параметры</div>
<div class="w" style="left:750px;top:193.2px;color:#111">Вид</div>
<div class="a" style="left:692px;top:203.5px;width:295px;height:10px;background:#f0f0f0;border-top:1px solid #d9d9d9"></div>
<div class="a" style="left:692px;top:213px;width:308px;height:1px;background:#d9d9d9"></div>
<div class="a" style="left:692px;top:203px;width:33.5px;height:11px;background:#fff;border-right:1px solid #d9d9d9"></div>
<div class="a" style="left:782px;top:204px;width:1px;height:9.5px;background:#d9d9d9"></div>
<div class="a" style="left:842px;top:204px;width:1px;height:9.5px;background:#d9d9d9"></div>
<div class="a" style="left:880px;top:204px;width:1px;height:9.5px;background:#d9d9d9"></div>
<div class="a" style="left:919px;top:204px;width:1px;height:9.5px;background:#d9d9d9"></div>
<div class="a" style="left:960px;top:204px;width:1px;height:9.5px;background:#d9d9d9"></div>
<div class="a" style="left:987px;top:204px;width:1px;height:9.5px;background:#d9d9d9"></div>
<div class="w" style="left:695px;top:204.5px;color:#111">Процессы</div>
<div class="w" style="left:727px;top:204.5px;color:#111">Производительность</div>
<div class="w" style="left:785px;top:204.5px;color:#111">Журнал приложений</div>
<div class="w" style="left:845px;top:204.5px;color:#111">Автозагрузка</div>
<div class="w" style="left:883px;top:204.5px;color:#111">Пользователи</div>
<div class="w" style="left:922.5px;top:204.5px;color:#111">Подробности</div>
<div class="w" style="left:963px;top:204.5px;color:#111">Службы</div>
<div class="a" style="left:775px;top:221.5px;width:3px;height:3px;border-left:1px solid #999;border-top:1px solid #999;transform:rotate(45deg)"></div>
<div class="a" style="left:864.5px;top:219px;width:1px;height:20px;background:#e5e5e5"></div>
<div class="a" style="left:918.5px;top:219px;width:1px;height:20px;background:#e5e5e5"></div>
<div class="a" style="left:951.5px;top:219px;width:1px;height:20px;background:#e5e5e5"></div>
<div class="a" style="left:985.5px;top:219px;width:1px;height:20px;background:#e5e5e5"></div>
<div class="a" style="left:692px;top:239px;width:308px;height:1px;background:#d5d5d5"></div>
<div class="w" style="left:696px;top:230.5px;color:#4c607a">Имя</div>
<div class="w" style="left:867px;top:230.5px;color:#4c607a">Состояние</div>
<div class="a" style="left:900px;top:219.5px;width:49px;text-align:right;font-size:8.5px;line-height:10px;color:#222;transform:scaleX(.85);transform-origin:100% 0">8%</div>
<div class="a" style="left:933px;top:219.5px;width:49px;text-align:right;font-size:8.5px;line-height:10px;color:#222;transform:scaleX(.85);transform-origin:100% 0">44%</div>
<div class="a" style="left:900px;top:230.5px;width:49px;text-align:right;font-size:7px;line-height:10px;color:#4c607a;transform:scaleX(.76);transform-origin:100% 0">ЦП</div>
<div class="a" style="left:933px;top:230.5px;width:49px;text-align:right;font-size:7px;line-height:10px;color:#4c607a;transform:scaleX(.76);transform-origin:100% 0">Память</div>
<div class="a" style="left:918.5px;top:239.50px;width:33px;height:17.70px;background:#fef7e0"></div>
<div class="a" style="left:951.5px;top:239.50px;width:34px;height:17.70px;background:#fef7e0"></div>
<div class="a" style="left:985.5px;top:239.50px;width:15px;height:17.70px;background:#fef7e0"></div>
<div class="a" style="left:951.5px;top:239.5px;width:1px;height:17.7px;background:#f1ead4"></div>
<div class="a" style="left:985.5px;top:239.5px;width:1px;height:17.7px;background:#f1ead4"></div>
<div class="w" style="left:697px;top:244.3px;color:#1f5fbf;font-size:8.5px;transform:scaleX(.8)">Приложения (5)</div>
<div class="a" style="left:918.5px;top:257.20px;width:33px;height:13.40px;background:#f9eca8"></div>
<div class="a" style="left:951.5px;top:257.20px;width:34px;height:13.40px;background:#fde08c"></div>
<div class="a" style="left:985.5px;top:257.20px;width:15px;height:13.40px;background:#f9eca8"></div>
<div class="a" style="left:696px;top:262.00px;width:2.5px;height:2.5px;border-right:1px solid #999;border-top:1px solid #999;transform:rotate(45deg)"></div>
<svg class="a" style="left:704px;top:259.60px" width="9" height="9"><circle cx="4" cy="4" r="3.6" fill="#1e8fd8"/><path d="M0.6 4.5 a3.5 3.5 0 0 1 6.8 -1.2 c-.6 -.9 -2.2 -1.2 -3.2 -.4 c-1 .8 -.7 2.3 .6 2.6 c1 .3 2 0 2.6 -.6 a3.6 3.6 0 0 1 -5.2 2.2 a3.6 3.6 0 0 1 -1.6 -2.6z" fill="#4fd17a"/><path d="M3 2.5 a2.4 2.4 0 0 1 4.2 .8 c-.6 -.6 -1.8 -.8 -2.6 -.2z" fill="#7ee0ff"/></svg>
<div class="w" style="left:716px;top:259.00px;color:#111">Microsoft Edge (22)</div>
<div class="a" style="left:900.5px;top:259.00px;width:49px;text-align:right;font-size:7px;line-height:10px;color:#222;transform:scaleX(.76);transform-origin:100% 0">0,4%</div>
<div class="a" style="left:933px;top:259.00px;width:49px;text-align:right;font-size:7px;line-height:10px;color:#222;transform:scaleX(.76);transform-origin:100% 0">994,2 МБ</div>
<div class="w" style="left:994px;top:259.00px;color:#222">0,1</div>
<div class="a" style="left:918.5px;top:270.00px;width:33px;height:13.40px;background:#f9eca8"></div>
<div class="a" style="left:951.5px;top:270.00px;width:34px;height:13.40px;background:#fde08c"></div>
<div class="a" style="left:985.5px;top:270.00px;width:15px;height:13.40px;background:#f9eca8"></div>
<div class="a" style="left:696px;top:274.80px;width:2.5px;height:2.5px;border-right:1px solid #999;border-top:1px solid #999;transform:rotate(45deg)"></div>
<svg class="a" style="left:704px;top:272.40px" width="9" height="9"><path d="M5.5 0.5 l2 1 v6 l-2 1 l-3.5 -3 l-1.2 1 l-.5 -.3 v-4.4 l.5 -.3 l1.2 1z M5.5 2.5 l-2 1.5 l2 1.5z M1.2 3 v2 l1 -1z" fill="#9b5fe0"/></svg>
<div class="w" style="left:716px;top:271.80px;color:#111">Microsoft Visual Studio 2019 Preview (32 бита) (30)</div>
<div class="a" style="left:900.5px;top:271.80px;width:49px;text-align:right;font-size:7px;line-height:10px;color:#222;transform:scaleX(.76);transform-origin:100% 0">2,6%</div>
<div class="a" style="left:933px;top:271.80px;width:49px;text-align:right;font-size:7px;line-height:10px;color:#222;transform:scaleX(.76);transform-origin:100% 0">799,2 МБ</div>
<div class="w" style="left:994px;top:271.80px;color:#222">0,1</div>
<div class="a" style="left:918.5px;top:282.80px;width:33px;height:13.40px;background:#f9eca8"></div>
<div class="a" style="left:951.5px;top:282.80px;width:34px;height:13.40px;background:#fde08c"></div>
<div class="a" style="left:985.5px;top:282.80px;width:15px;height:13.40px;background:#fff4c4"></div>
<div class="a" style="left:696px;top:287.60px;width:2.5px;height:2.5px;border-right:1px solid #999;border-top:1px solid #999;transform:rotate(45deg)"></div>
<svg class="a" style="left:704px;top:285.20px" width="9" height="9"><rect x=".5" y="1" width="7.5" height="6.5" fill="#e9eef2" stroke="#9aa8b4" stroke-width=".8"/><rect x=".5" y="1" width="7.5" height="1.4" fill="#b8c4cc"/><rect x="3" y="3.5" width="2.2" height="3" fill="#2a7ad8"/></svg>
<div class="w" style="left:716px;top:284.60px;color:#111">Rubot_Youtube</div>
<div class="a" style="left:900.5px;top:284.60px;width:49px;text-align:right;font-size:7px;line-height:10px;color:#222;transform:scaleX(.76);transform-origin:100% 0">1,5%</div>
<div class="a" style="left:933px;top:284.60px;width:49px;text-align:right;font-size:7px;line-height:10px;color:#222;transform:scaleX(.76);transform-origin:100% 0">934,4 МБ</div>
<div class="w" style="left:997.5px;top:284.60px;color:#222">0</div>
<div class="a" style="left:918.5px;top:295.60px;width:33px;height:13.40px;background:#fff4c4"></div>
<div class="a" style="left:951.5px;top:295.60px;width:34px;height:13.40px;background:#f9eca8"></div>
<div class="a" style="left:985.5px;top:295.60px;width:15px;height:13.40px;background:#fff4c4"></div>
<div class="a" style="left:696px;top:300.40px;width:2.5px;height:2.5px;border-right:1px solid #999;border-top:1px solid #999;transform:rotate(45deg)"></div>
<svg class="a" style="left:704px;top:298.00px" width="9" height="9"><rect x="1.5" y="1" width="7" height="6.5" fill="#d8e2ea" stroke="#8b9aa6" stroke-width=".8"/><rect x="3" y="2.5" width="4.5" height="3" fill="#5ab0e8"/><path d="M.5 8.5 h3 v-2.5 h-3z" fill="#4caf50"/></svg>
<div class="w" style="left:716px;top:297.40px;color:#111">Диспетчер задач</div>
<div class="a" style="left:900.5px;top:297.40px;width:49px;text-align:right;font-size:7px;line-height:10px;color:#222;transform:scaleX(.76);transform-origin:100% 0">0%</div>
<div class="a" style="left:933px;top:297.40px;width:49px;text-align:right;font-size:7px;line-height:10px;color:#222;transform:scaleX(.76);transform-origin:100% 0">18,0 МБ</div>
<div class="w" style="left:997.5px;top:297.40px;color:#222">0</div>
<div class="a" style="left:918.5px;top:308.40px;width:33px;height:13.40px;background:#fff4c4"></div>
<div class="a" style="left:951.5px;top:308.40px;width:34px;height:13.40px;background:#f9eca8"></div>
<div class="a" style="left:985.5px;top:308.40px;width:15px;height:13.40px;background:#fff4c4"></div>
<div class="a" style="left:696px;top:313.20px;width:2.5px;height:2.5px;border-right:1px solid #999;border-top:1px solid #999;transform:rotate(45deg)"></div>
<svg class="a" style="left:704px;top:310.80px" width="9" height="9"><path d="M.5 1.5 h3 l1 1 h3.5 v5.5 h-7.5z" fill="#f8c846"/><path d="M.5 3 h7.5" stroke="#e0a820" stroke-width=".6"/><rect x="2.5" y="4.5" width="3.5" height="3.5" fill="#2a7ad8"/></svg>
<div class="w" style="left:716px;top:310.20px;color:#111">Проводник</div>
<div class="a" style="left:900.5px;top:310.20px;width:49px;text-align:right;font-size:7px;line-height:10px;color:#222;transform:scaleX(.76);transform-origin:100% 0">0%</div>
<div class="a" style="left:933px;top:310.20px;width:49px;text-align:right;font-size:7px;line-height:10px;color:#222;transform:scaleX(.76);transform-origin:100% 0">37,5 МБ</div>
<div class="w" style="left:997.5px;top:310.20px;color:#222">0</div>
<div class="a" style="left:918.5px;top:321.20px;width:33px;height:17.30px;background:#fef7e0"></div>
<div class="a" style="left:951.5px;top:321.20px;width:34px;height:17.30px;background:#fef7e0"></div>
<div class="a" style="left:985.5px;top:321.20px;width:15px;height:17.30px;background:#fef7e0"></div>
<div class="a" style="left:951.5px;top:321.2px;width:1px;height:17.3px;background:#f1ead4"></div>
<div class="a" style="left:985.5px;top:321.2px;width:1px;height:17.3px;background:#f1ead4"></div>
<div class="w" style="left:697px;top:326px;color:#1f5fbf;font-size:8.5px;transform:scaleX(.8)">Фоновые процессы (59)</div>
<div class="a" style="left:918.5px;top:338.50px;width:33px;height:13.20px;background:#fff4c4"></div>
<div class="a" style="left:951.5px;top:338.50px;width:34px;height:13.20px;background:#f9eca8"></div>
<div class="a" style="left:985.5px;top:338.50px;width:15px;height:13.20px;background:#fff4c4"></div>
<div class="a" style="left:696px;top:343.30px;width:2.5px;height:2.5px;border-right:1px solid #999;border-top:1px solid #999;transform:rotate(45deg)"></div>
<svg class="a" style="left:704px;top:340.90px" width="9" height="9"><rect x=".5" y=".5" width="7.5" height="7.5" rx="1" fill="#f6a623"/><path d="M4.2 1.8 l2.5 2.8 h-1.5 v2 h-2 v-2 h-1.5z" fill="#222"/></svg>
<div class="w" style="left:716px;top:340.30px;color:#111">4game client service (32 бита)</div>
<div class="a" style="left:900.5px;top:340.30px;width:49px;text-align:right;font-size:7px;line-height:10px;color:#222;transform:scaleX(.76);transform-origin:100% 0">0%</div>
<div class="a" style="left:933px;top:340.30px;width:49px;text-align:right;font-size:7px;line-height:10px;color:#222;transform:scaleX(.76);transform-origin:100% 0">1,6 МБ</div>
<div class="w" style="left:997.5px;top:340.30px;color:#222">0</div>
<div class="a" style="left:918.5px;top:351.10px;width:33px;height:13.20px;background:#f9eca8"></div>
<div class="a" style="left:951.5px;top:351.10px;width:34px;height:13.20px;background:#f9eca8"></div>
<div class="a" style="left:985.5px;top:351.10px;width:15px;height:13.20px;background:#fff4c4"></div>
<div class="a" style="left:696px;top:355.90px;width:2.5px;height:2.5px;border-right:1px solid #999;border-top:1px solid #999;transform:rotate(45deg)"></div>
<svg class="a" style="left:704px;top:353.50px" width="9" height="9"><rect x=".5" y="1" width="7.5" height="6.5" fill="#e9eef2" stroke="#9aa8b4" stroke-width=".8"/><rect x=".5" y="1" width="7.5" height="1.4" fill="#b8c4cc"/><rect x="3" y="3.5" width="2.2" height="3" fill="#2a7ad8"/></svg>
<div class="w" style="left:716px;top:352.90px;color:#111">Antimalware Service Executable</div>
<div class="a" style="left:900.5px;top:352.90px;width:49px;text-align:right;font-size:7px;line-height:10px;color:#222;transform:scaleX(.76);transform-origin:100% 0">0,2%</div>
<div class="a" style="left:933px;top:352.90px;width:49px;text-align:right;font-size:7px;line-height:10px;color:#222;transform:scaleX(.76);transform-origin:100% 0">88,0 МБ</div>
<div class="w" style="left:997.5px;top:352.90px;color:#222">0</div>
<div class="a" style="left:918.5px;top:363.70px;width:33px;height:13.20px;background:#fff4c4"></div>
<div class="a" style="left:951.5px;top:363.70px;width:34px;height:13.20px;background:#f9eca8"></div>
<div class="a" style="left:985.5px;top:363.70px;width:15px;height:13.20px;background:#fff4c4"></div>
<div class="a" style="left:696px;top:368.50px;width:2.5px;height:2.5px;border-right:1px solid #999;border-top:1px solid #999;transform:rotate(45deg)"></div>
<svg class="a" style="left:704px;top:366.10px" width="9" height="9"><rect x=".7" y="1.2" width="7.6" height="6" rx=".8" fill="#fff" stroke="#2a7ad8" stroke-width=".9"/></svg>
<div class="w" style="left:716px;top:365.50px;color:#111">Bluetooth Radio Management Support</div>
<div class="a" style="left:900.5px;top:365.50px;width:49px;text-align:right;font-size:7px;line-height:10px;color:#222;transform:scaleX(.76);transform-origin:100% 0">0%</div>
<div class="a" style="left:933px;top:365.50px;width:49px;text-align:right;font-size:7px;line-height:10px;color:#222;transform:scaleX(.76);transform-origin:100% 0">0,1 МБ</div>
<div class="w" style="left:997.5px;top:365.50px;color:#222">0</div>
<div class="a" style="left:918.5px;top:376.30px;width:33px;height:13.20px;background:#fff4c4"></div>
<div class="a" style="left:951.5px;top:376.30px;width:34px;height:13.20px;background:#f9eca8"></div>
<div class="a" style="left:985.5px;top:376.30px;width:15px;height:13.20px;background:#fff4c4"></div>
<div class="a" style="left:696px;top:381.10px;width:2.5px;height:2.5px;border-right:1px solid #999;border-top:1px solid #999;transform:rotate(45deg)"></div>
<svg class="a" style="left:704px;top:378.70px" width="9" height="9"><rect x=".5" y="1" width="7.5" height="6.5" fill="#e9eef2" stroke="#9aa8b4" stroke-width=".8"/><rect x=".5" y="1" width="7.5" height="1.4" fill="#b8c4cc"/><rect x="3" y="3.5" width="2.2" height="3" fill="#2a7ad8"/></svg>
<div class="w" style="left:716px;top:378.10px;color:#111">capiws.exe (32 бита)</div>
<div class="a" style="left:900.5px;top:378.10px;width:49px;text-align:right;font-size:7px;line-height:10px;color:#222;transform:scaleX(.76);transform-origin:100% 0">0%</div>
<div class="a" style="left:933px;top:378.10px;width:49px;text-align:right;font-size:7px;line-height:10px;color:#222;transform:scaleX(.76);transform-origin:100% 0">8,3 МБ</div>
<div class="w" style="left:997.5px;top:378.10px;color:#222">0</div>
<div class="a" style="left:918.5px;top:388.90px;width:33px;height:13.20px;background:#f9eca8"></div>
<div class="a" style="left:951.5px;top:388.90px;width:34px;height:13.20px;background:#f9eca8"></div>
<div class="a" style="left:985.5px;top:388.90px;width:15px;height:13.20px;background:#fff4c4"></div>
<svg class="a" style="left:704px;top:391.30px" width="9" height="9"><rect x=".5" y=".5" width="7.5" height="7.5" fill="#111"/><path d="M4.2 1.8 l2.6 5 h-5.2z" fill="#eee"/><path d="M4.2 3.5 l1.3 2.6 h-2.6z" fill="#111"/></svg>
<div class="w" style="left:716px;top:390.70px;color:#111">Corsair LINK 4 (32 бита)</div>
<div class="a" style="left:900.5px;top:390.70px;width:49px;text-align:right;font-size:7px;line-height:10px;color:#222;transform:scaleX(.76);transform-origin:100% 0">0,3%</div>
<div class="a" style="left:933px;top:390.70px;width:49px;text-align:right;font-size:7px;line-height:10px;color:#222;transform:scaleX(.76);transform-origin:100% 0">22,2 МБ</div>
<div class="w" style="left:997.5px;top:390.70px;color:#222">0</div>
<div class="a" style="left:918.5px;top:401.50px;width:33px;height:13.20px;background:#f9eca8"></div>
<div class="a" style="left:951.5px;top:401.50px;width:34px;height:13.20px;background:#f9eca8"></div>
<div class="a" style="left:985.5px;top:401.50px;width:15px;height:13.20px;background:#f9eca8"></div>
<div class="a" style="left:696px;top:406.30px;width:2.5px;height:2.5px;border-right:1px solid #999;border-top:1px solid #999;transform:rotate(45deg)"></div>
<svg class="a" style="left:704px;top:403.90px" width="9" height="9"><rect x=".5" y="1" width="7.5" height="6.5" fill="#e9eef2" stroke="#9aa8b4" stroke-width=".8"/><rect x=".5" y="1" width="7.5" height="1.4" fill="#b8c4cc"/><rect x="3" y="3.5" width="2.2" height="3" fill="#2a7ad8"/></svg>
<div class="w" style="left:716px;top:403.30px;color:#111">Corsair LINK 4 Service (32 бита)</div>
<div class="a" style="left:900.5px;top:403.30px;width:49px;text-align:right;font-size:7px;line-height:10px;color:#222;transform:scaleX(.76);transform-origin:100% 0">0,1%</div>
<div class="a" style="left:933px;top:403.30px;width:49px;text-align:right;font-size:7px;line-height:10px;color:#222;transform:scaleX(.76);transform-origin:100% 0">19,8 МБ</div>
<div class="w" style="left:994px;top:403.30px;color:#222">0,1</div>
<div class="a" style="left:918.5px;top:414.10px;width:33px;height:13.20px;background:#fff4c4"></div>
<div class="a" style="left:951.5px;top:414.10px;width:34px;height:13.20px;background:#f9eca8"></div>
<div class="a" style="left:985.5px;top:414.10px;width:15px;height:13.20px;background:#fff4c4"></div>
<svg class="a" style="left:704px;top:416.50px" width="9" height="9"><path d="M1 7.5 l1 -2.5 l4 -4 l1.5 1.5 l-4 4z" fill="#2050b0"/></svg>
<div class="w" style="left:716px;top:415.90px;color:#111">CTF-загрузчик</div>
<div class="a" style="left:900.5px;top:415.90px;width:49px;text-align:right;font-size:7px;line-height:10px;color:#222;transform:scaleX(.76);transform-origin:100% 0">0%</div>
<div class="a" style="left:933px;top:415.90px;width:49px;text-align:right;font-size:7px;line-height:10px;color:#222;transform:scaleX(.76);transform-origin:100% 0">2,2 МБ</div>
<div class="w" style="left:997.5px;top:415.90px;color:#222">0</div>
<div class="a" style="left:692px;top:424px;width:308px;height:7.6px;background:#cdcdcd"></div>
<div class="a" style="left:692px;top:424px;width:8px;height:7.6px;background:#f0f0f0"></div>
<div class="a" style="left:695.5px;top:426.3px;width:2.5px;height:2.5px;border-left:1px solid #555;border-bottom:1px solid #555;transform:rotate(45deg)"></div>
<div class="a" style="left:696px;top:437.5px;width:9px;height:9px;border:1px solid #aaa;border-radius:50%"></div>
<div class="a" style="left:699px;top:441px;width:3px;height:3px;border-left:1px solid #999;border-top:1px solid #999;transform:rotate(45deg)"></div>
<div class="w" style="left:707px;top:437px;color:#111">Меньше</div>
</body></html>
